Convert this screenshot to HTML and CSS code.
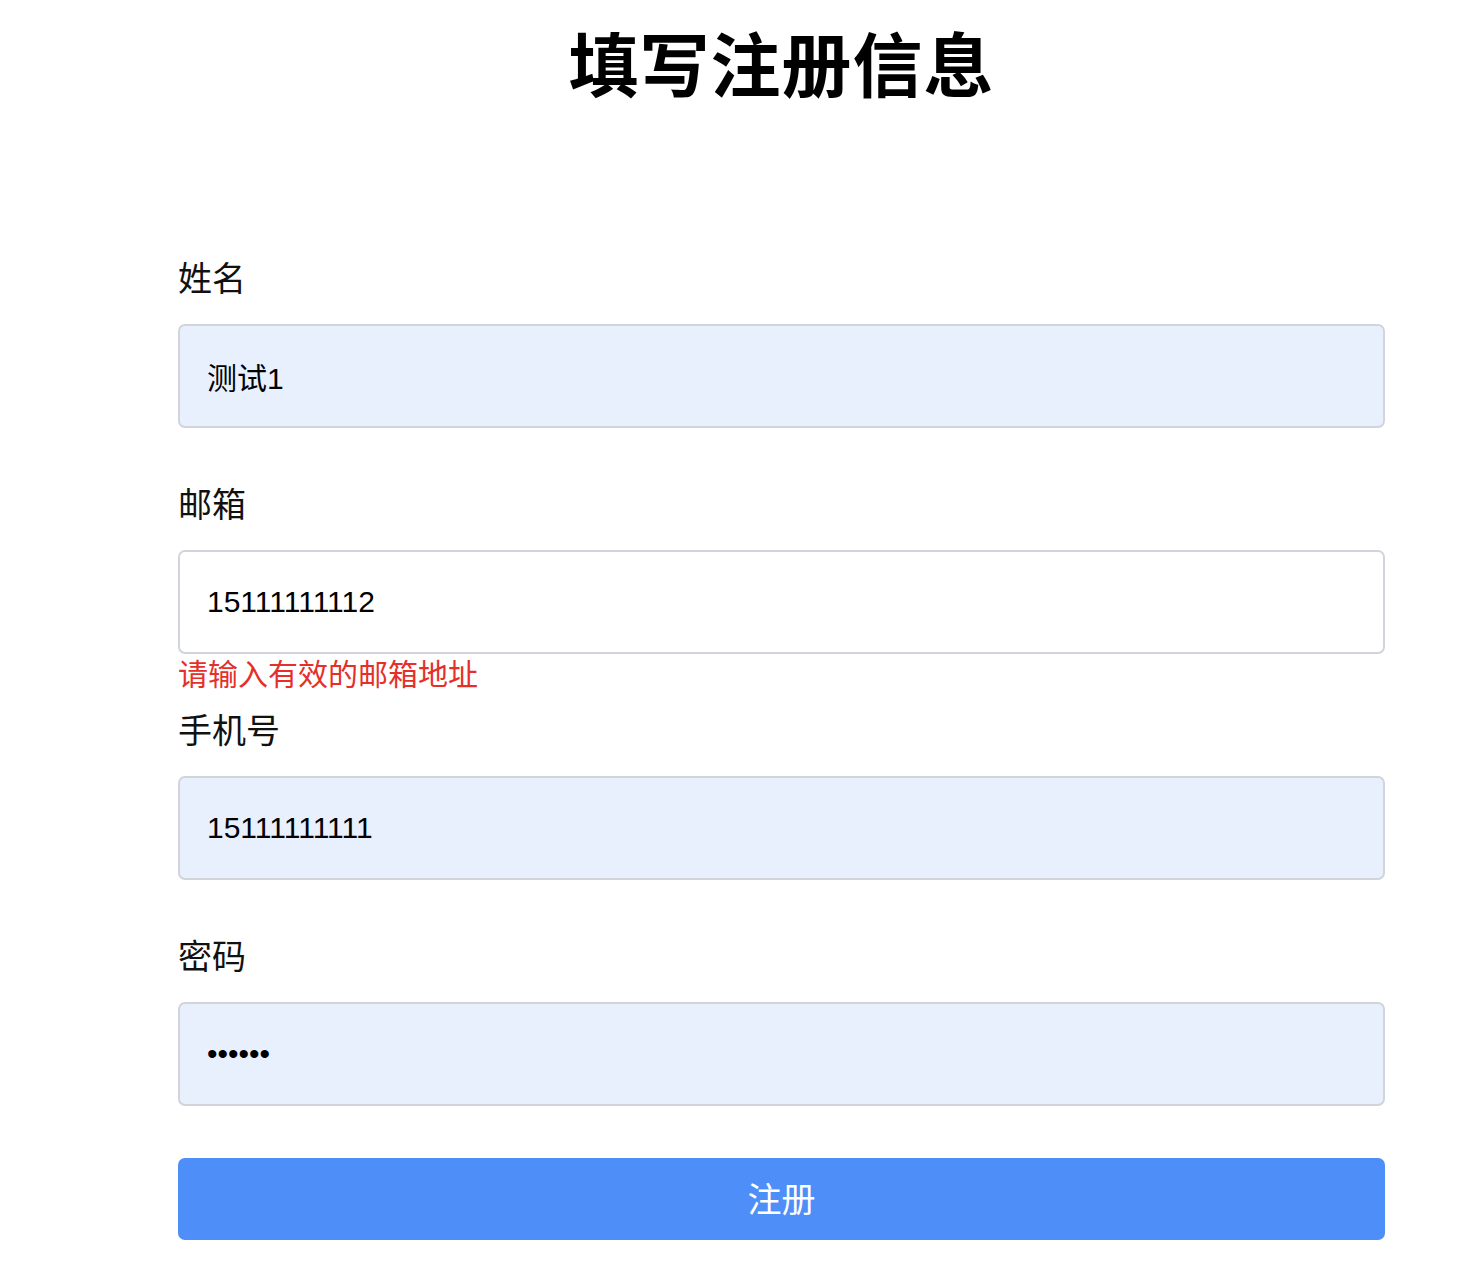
FILE: index.html
```html
<!DOCTYPE html>
<html lang="zh-CN">
<head>
<meta charset="utf-8">
<title>填写注册信息</title>
<link rel="stylesheet" href="styles.css">
</head>
<body>
<div class="page">
  <h1 class="title">填写注册信息</h1>
  <form class="form">
    <div class="field">
      <label class="label">姓名</label>
      <input class="input filled" type="text" value="测试1">
      <div class="error"></div>
    </div>
    <div class="field">
      <label class="label">邮箱</label>
      <input class="input" type="text" value="15111111112">
      <div class="error">请输入有效的邮箱地址</div>
    </div>
    <div class="field">
      <label class="label">手机号</label>
      <input class="input filled" type="text" value="15111111111">
      <div class="error"></div>
    </div>
    <div class="field">
      <label class="label">密码</label>
      <input class="input filled" type="password" value="123456">
      <div class="error"></div>
    </div>
    <button class="submit" type="button">注册</button>
  </form>
</div>
</body>
</html>
```
FILE: styles.css
```css
html, body {
  margin: 0;
  padding: 0;
  background: #ffffff;
}
body {
  font-family: "Liberation Sans", "Noto Sans CJK SC", sans-serif;
  color: #000;
}
.page {
  width: 1207px;
  margin-left: 178px;
  padding-top: 26px;
}
.title {
  margin: 0;
  font-size: 70px;
  line-height: 84px;
  font-weight: 700;
  text-align: center;
  letter-spacing: 1px;
}
.form {
  display: flex;
  flex-direction: column;
  margin-top: 142px;
}
.field {
  display: flex;
  flex-direction: column;
  margin-bottom: 14px;
}
.label {
  font-size: 34px;
  line-height: 48px;
  padding-top: 3px;
  margin-bottom: 21px;
  color: #111;
}
.input {
  box-sizing: border-box;
  height: 104px;
  width: 100%;
  border: 2px solid #d1d5db;
  border-radius: 7px;
  background: #ffffff;
  padding: 0 27px;
  font-family: "Liberation Sans", "Noto Sans CJK SC", sans-serif;
  font-size: 30px;
  color: #000;
  outline: none;
}
.input.filled {
  background: #e8f0fe;
}
.error {
  min-height: 36px;
  padding-top: 3px;
  margin-bottom: -3px;
  font-size: 30px;
  line-height: 36px;
  color: #e5302a;
}
.submit {
  margin-top: 2px;
  height: 82px;
  width: 100%;
  border: none;
  border-radius: 7px;
  background: #4e8ef8;
  color: #ffffff;
  font-family: "Liberation Sans", "Noto Sans CJK SC", sans-serif;
  font-size: 34px;
  padding: 0 0 4px;
}
```
